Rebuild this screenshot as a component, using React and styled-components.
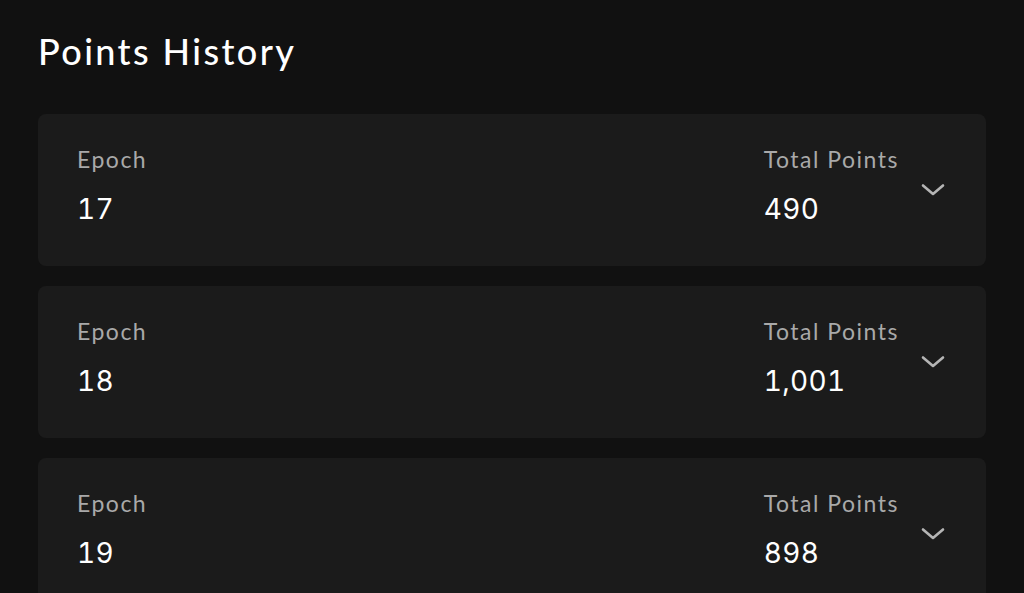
import styled, { createGlobalStyle } from 'styled-components'

const GlobalStyle = createGlobalStyle`
  html, body {
    margin: 0;
    background: #111111;
  }
`

const Page = styled.div`
  min-height: 593px;
  box-sizing: border-box;
  padding: 25px 38px 0;
  background: #111111;
  overflow: hidden;
`

const Title = styled.h1`
  margin: 0 0 37px;
  font-family: 'Lato', sans-serif;
  font-weight: 500;
  font-size: 36px;
  line-height: 52px;
  letter-spacing: 2.4px;
  color: #ffffff;
`

const List = styled.div`
  display: flex;
  flex-direction: column;
  gap: 20px;
`

const Card = styled.div`
  height: 152px;
  box-sizing: border-box;
  padding: 0 41px 0 39px;
  background: #1b1b1b;
  border-radius: 8px;
  display: flex;
  align-items: center;
`

const Field = styled.div`
  display: flex;
  flex-direction: column;
  gap: 19px;
  margin-bottom: 10px;
  white-space: nowrap;
  flex: ${p => (p.$grow ? 1 : 'none')};
  min-width: ${p => (p.$grow ? 0 : '135px')};
`

const Label = styled.div`
  font-family: 'Lato', sans-serif;
  font-size: 23px;
  line-height: 28px;
  letter-spacing: 1.5px;
  color: #a9a9a9;
`

const Value = styled.div`
  font-family: 'Inter', sans-serif;
  font-size: 28px;
  line-height: 34px;
  font-variant-numeric: tabular-nums;
  letter-spacing: 0.3px;
  color: #ffffff;
`

const Toggle = styled.button`
  flex: none;
  margin-left: 22px;
  padding: 0;
  border: 0;
  background: none;
  width: 24px;
  height: 24px;
  display: flex;
  align-items: center;
  justify-content: center;
  cursor: pointer;
`

const Chevron = () => (
  <svg width="24" height="14" viewBox="0 0 24 14" fill="none">
    <path d="M2 2.5 L12 11 L22 2.5" stroke="#b5b5b5" strokeWidth="2.6" strokeLinecap="round" strokeLinejoin="round" />
  </svg>
)

const rows = [
  { epoch: 17, points: '490' },
  { epoch: 18, points: '1,001' },
  { epoch: 19, points: '898' },
]

export default function App() {
  return (
    <Page>
      <GlobalStyle />
      <Title>Points History</Title>
      <List>
        {rows.map(r => (
          <Card key={r.epoch}>
            <Field $grow>
              <Label>Epoch</Label>
              <Value>{r.epoch}</Value>
            </Field>
            <Field>
              <Label>Total Points</Label>
              <Value>{r.points}</Value>
            </Field>
            <Toggle aria-label="Expand">
              <Chevron />
            </Toggle>
          </Card>
        ))}
      </List>
    </Page>
  )
}
